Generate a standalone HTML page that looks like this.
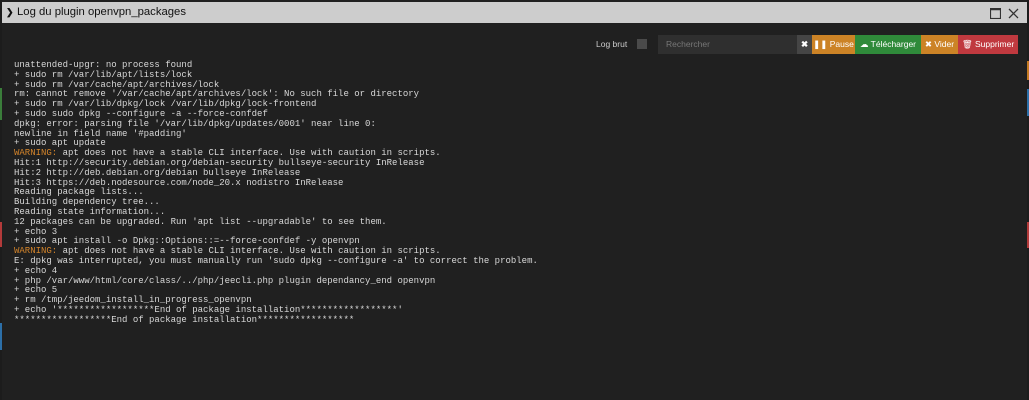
<!DOCTYPE html><html><head><style>
body{margin:0;width:1029px;height:400px;background:#1c1c1c;position:relative;overflow:hidden;font-family:"Liberation Sans",sans-serif}
.strip{position:absolute;width:2px}
.dlg{position:absolute;left:2px;top:0;width:1025px;height:400px;background:#202020}
.title{position:absolute;left:0;top:2px;width:1025px;height:21px;background:#cdcdcd;color:#111;font-size:11.3px;line-height:21px}
.title .t{position:absolute;left:15px;top:0}
.title .ch{position:absolute;left:4px;top:0;font-weight:bold;font-size:9px}
.tb{position:absolute;top:35px;height:19px;font-size:8.5px;line-height:19px;color:#fff}
pre{position:absolute;left:12px;top:61px;margin:0;font-family:"Liberation Mono",monospace;font-size:9px;line-height:9.8px;color:#d8d8d8}
.w{color:#d2832a}
</style></head><body>
<div class="strip" style="left:0;top:88px;height:32px;background:#3a7d3a"></div>
<div class="strip" style="left:0;top:222px;height:25px;background:#b33a3a"></div>
<div class="strip" style="left:0;top:323px;height:27px;background:#2c6fa8"></div>
<div class="strip" style="left:1027px;top:61px;height:19px;background:#c47a22"></div>
<div class="strip" style="left:1027px;top:89px;height:27px;background:#2c6fa8"></div>
<div class="strip" style="left:1027px;top:222px;height:26px;background:#b33a3a"></div>
<div class="dlg">
<div class="title"><span class="ch">&#10095;</span><span class="t">Log du plugin openvpn_packages</span>
<svg style="position:absolute;left:988px;top:6px" width="11" height="11"><rect x="0.5" y="0.5" width="10" height="10" fill="none" stroke="#333" stroke-width="1.2"/><line x1="0" y1="1.5" x2="11" y2="1.5" stroke="#333" stroke-width="1.5"/></svg>
<svg style="position:absolute;left:1006px;top:6px" width="11" height="11"><path d="M1 1L10 10M10 1L1 10" stroke="#333" stroke-width="1.3"/></svg>
</div>
<div class="tb" style="left:594px;color:#ccc">Log brut</div>
<div class="tb" style="left:635px;top:39px;width:10px;height:10px;background:#4a4a4a"></div>
<div class="tb" style="left:656px;width:139px;background:#2f2f2f;color:#777;padding-left:8px;box-sizing:border-box">Rechercher</div>
<div class="tb" style="left:795px;width:15px;background:#454545;text-align:center;font-weight:bold">✖</div>
<div class="tb" style="left:810px;width:43px;background:#cc8326;text-align:center">❚❚ Pause</div>
<div class="tb" style="left:853px;width:66px;background:#2f8a3a;text-align:center">☁ Télécharger</div>
<div class="tb" style="left:919px;width:37px;background:#cc8326;text-align:center">✖ Vider</div>
<div class="tb" style="left:956px;width:60px;background:#c0393f;text-align:center">🗑 Supprimer</div>
<pre>unattended-upgr: no process found
+ sudo rm /var/lib/apt/lists/lock
+ sudo rm /var/cache/apt/archives/lock
rm: cannot remove '/var/cache/apt/archives/lock': No such file or directory
+ sudo rm /var/lib/dpkg/lock /var/lib/dpkg/lock-frontend
+ sudo sudo dpkg --configure -a --force-confdef
dpkg: error: parsing file '/var/lib/dpkg/updates/0001' near line 0:
newline in field name '#padding'
+ sudo apt update
<span class="w">WARNING:</span> apt does not have a stable CLI interface. Use with caution in scripts.
Hit:1 http://security.debian.org/debian-security bullseye-security InRelease
Hit:2 http://deb.debian.org/debian bullseye InRelease
Hit:3 https://deb.nodesource.com/node_20.x nodistro InRelease
Reading package lists...
Building dependency tree...
Reading state information...
12 packages can be upgraded. Run 'apt list --upgradable' to see them.
+ echo 3
+ sudo apt install -o Dpkg::Options::=--force-confdef -y openvpn
<span class="w">WARNING:</span> apt does not have a stable CLI interface. Use with caution in scripts.
E: dpkg was interrupted, you must manually run 'sudo dpkg --configure -a' to correct the problem.
+ echo 4
+ php /var/www/html/core/class/../php/jeecli.php plugin dependancy_end openvpn
+ echo 5
+ rm /tmp/jeedom_install_in_progress_openvpn
+ echo '******************End of package installation******************'
******************End of package installation******************</pre>
</div>
</body></html>
